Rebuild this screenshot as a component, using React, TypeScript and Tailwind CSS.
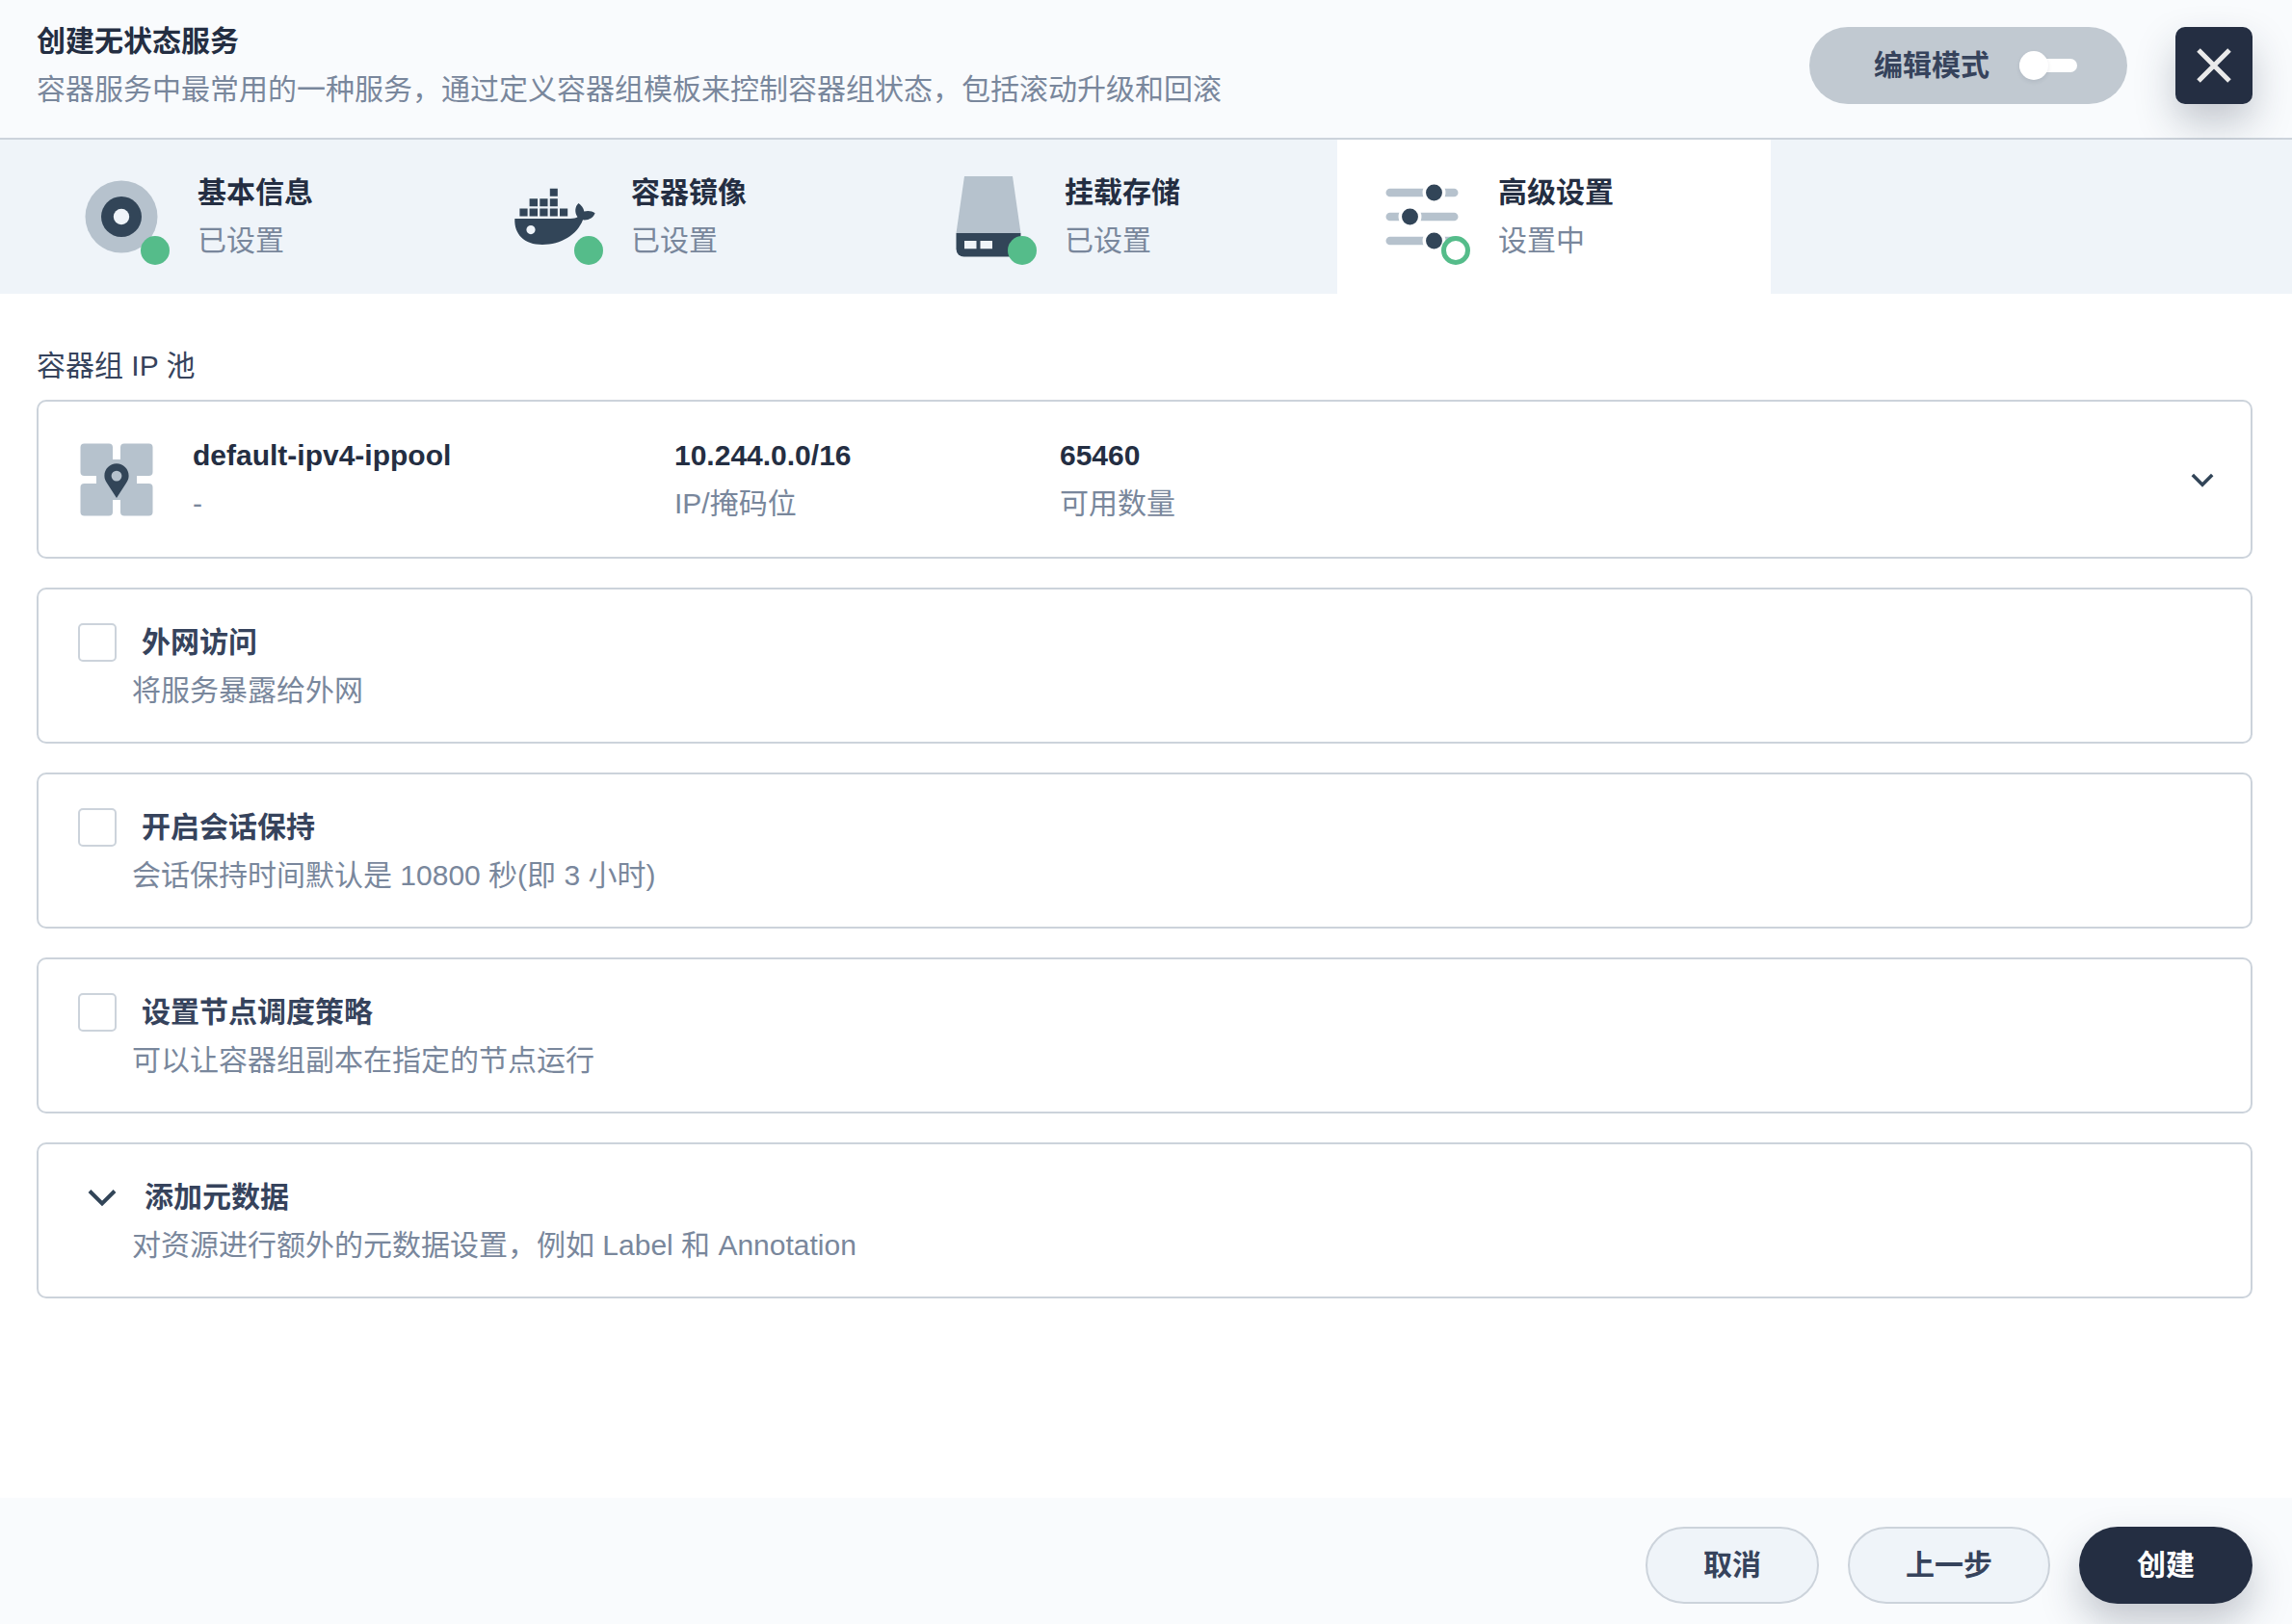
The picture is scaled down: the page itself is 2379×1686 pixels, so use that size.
import { useState } from 'react'
import type { ReactNode } from 'react'

type Step = {
    title: string
    status: string
    done: boolean
    icon: ReactNode
}

type Option = {
    id: string
    title: string
    description: string
}

const BasicIcon = () => (
    <svg viewBox="0 0 100 100" className="size-full">
        <circle cx="50" cy="50" r="37.5" fill="#b6c2cd" />
        <circle cx="50" cy="50" r="21" fill="#324558" />
        <circle cx="50" cy="50" r="8.2" fill="#eff4f9" />
    </svg>
)

const DockerIcon = () => (
    <svg viewBox="0 0 100 100" className="size-full" fill="#324558">
        <path d="M44.8 20.8h8v8h-8zM23.6 31.2h8.4v8h-8.4zM34.3 31.2h8.2v8h-8.2zM44.8 31.2h8v8h-8zM13.4 41.5h8.2v8h-8.2zM23.6 41.5h8.4v8h-8.4zM34.3 41.5h8.2v8h-8.2zM44.8 41.5h8v8h-8zM55 41.5h8.2v8h-8.2z" />
        <path
            fillRule="evenodd"
            d="M8.3 52H66C69.5 52 72 51.5 73.500 50.300C70.300 46 70.500 39.500 74.500 36C77.500 38 79.800 41 80.300 44.600C84 43.600 88.500 44 91.600 46.200C90 51 85 53.900 79 53.300C73 69 56 79 37 79C18 79 7.5 68 8.300 52ZM25 59A4.600 4.600 0 1 0 25 68.200A4.600 4.600 0 1 0 25 59Z"
        />
    </svg>
)

const StorageIcon = () => (
    <svg viewBox="0 0 100 100" className="size-full">
        <path d="M25 8H75L83.500 67H16.500Z" fill="#b6c2cd" />
        <path d="M16.500 67H83.500V83.500A8 8 0 0 1 75.500 91.500H24.500A8 8 0 0 1 16.500 83.500Z" fill="#324558" />
        <path d="M25 75h12.500v8.300h-12.500zM41.500 75h12.500v8.300h-12.500z" fill="#eff4f9" />
    </svg>
)

const SettingsIcon = () => (
    <svg viewBox="0 0 100 100" className="size-full">
        <g stroke="#b6c2cd" strokeWidth="8.600" strokeLinecap="round">
            <path d="M16.800 25H83.200M16.800 50H83.200M16.800 75H83.200" />
        </g>
        <g fill="#324558" stroke="#fff" strokeWidth="3.500">
            <circle cx="62.500" cy="25" r="10.200" />
            <circle cx="37.500" cy="50" r="10.200" />
            <circle cx="62.500" cy="75" r="10.200" />
        </g>
    </svg>
)

const PoolIcon = () => (
    <svg viewBox="0 0 100 100" className="size-full">
        <g fill="#b6c2cd">
            <rect x="12.500" y="12.500" width="33.500" height="33.500" rx="4" />
            <rect x="54" y="12.500" width="33.500" height="33.500" rx="4" />
            <rect x="12.500" y="54" width="33.500" height="33.500" rx="4" />
            <rect x="54" y="54" width="33.500" height="33.500" rx="4" />
            <rect x="29" y="29" width="42" height="42" />
        </g>
        <path
            fillRule="evenodd"
            fill="#324558"
            d="M50 33.300C57 33.300 62.600 38.900 62.600 45.900C62.600 49 61.500 51 60 53.500L50 69L40 53.500C38.500 51 37.400 49 37.400 45.900C37.400 38.900 43 33.300 50 33.300ZM50 40.700A5.400 5.400 0 1 0 50 51.500A5.400 5.400 0 1 0 50 40.700Z"
        />
    </svg>
)

const steps: Step[] = [
    { title: '基本信息', status: '已设置', done: true, icon: <BasicIcon /> },
    { title: '容器镜像', status: '已设置', done: true, icon: <DockerIcon /> },
    { title: '挂载存储', status: '已设置', done: true, icon: <StorageIcon /> },
    { title: '高级设置', status: '设置中', done: false, icon: <SettingsIcon /> },
]

const options: Option[] = [
    { id: 'external', title: '外网访问', description: '将服务暴露给外网' },
    { id: 'session', title: '开启会话保持', description: '会话保持时间默认是 10800 秒(即 3 小时)' },
    { id: 'schedule', title: '设置节点调度策略', description: '可以让容器组副本在指定的节点运行' },
]

export default function App() {
    const [current, setCurrent] = useState(3)
    const [editMode, setEditMode] = useState(false)
    const [checked, setChecked] = useState<string[]>([])

    const toggle = (id: string) => {
        setChecked(checked.includes(id) ? checked.filter((c) => c !== id) : [...checked, id])
    }

    return (
        <div className="flex min-h-screen flex-col bg-white font-['Liberation_Sans','Noto_Sans_CJK_SC',sans-serif] text-[30px] leading-[50px] text-[#79879c]">
            <header className="flex items-start justify-between border-b-2 border-[#ccd3db] bg-[#f9fbfd] pt-[18px] pr-[41px] pb-[25px] pl-[38px]">
                <div>
                    <h1 className="font-bold text-[#242e42]">创建无状态服务</h1>
                    <p>容器服务中最常用的一种服务，通过定义容器组模板来控制容器组状态，包括滚动升级和回滚</p>
                </div>
                <div className="flex gap-[50px] pt-[10px]">
                    <button
                        type="button"
                        role="switch"
                        aria-checked={editMode}
                        onClick={() => setEditMode(!editMode)}
                        className="flex h-20 items-center gap-[31px] rounded-full bg-[#c1c9d1] pr-[52px] pl-[67px] font-bold text-[#36435c]"
                    >
                        编辑模式
                        <span className={`flex h-[14px] w-[60px] items-center rounded-full bg-white ${editMode ? 'justify-end' : ''}`}>
                            <span className="size-[30px] rounded-full bg-white shadow-[0_2px_4px_rgba(36,46,66,0.1)]" />
                        </span>
                    </button>
                    <button
                        type="button"
                        aria-label="关闭"
                        className="flex size-20 items-center justify-center rounded-[10px] bg-[#242e42] shadow-[0_20px_40px_rgba(36,46,66,0.25)]"
                    >
                        <svg viewBox="0 0 50 50" className="size-[50px]" fill="none" stroke="#eaeaea" strokeWidth="5">
                            <path d="M9 9L41 41M41 9L9 41" />
                        </svg>
                    </button>
                </div>
            </header>

            <nav className="flex bg-[#eff4f9] pl-[38px]">
                {steps.map((step, i) => (
                    <button
                        key={step.title}
                        type="button"
                        onClick={() => setCurrent(i)}
                        className={`flex h-40 w-[450px] items-center gap-[29px] px-[38px] text-left ${i === current ? 'bg-white' : ''}`}
                    >
                        <span className="relative size-[100px]">
                            {step.icon}
                            <span
                                className={`absolute right-0 bottom-0 size-[30px] rounded-full ${step.done ? 'bg-[#55bc8a]' : 'border-[5px] border-[#55bc8a] bg-white'}`}
                            />
                        </span>
                        <span>
                            <span className="block font-bold text-[#242e42]">{step.title}</span>
                            <span className="block">{step.status}</span>
                        </span>
                    </button>
                ))}
            </nav>

            <main className="flex-1 pt-[50px] pr-[41px] pb-[50px] pl-[38px]">
                <h2 className="mb-[10px] text-[#36435c]">容器组 IP 池</h2>
                <div className="flex flex-col gap-[30px]">
                    <button
                        type="button"
                        aria-label="选择 IP 池"
                        className="flex items-center rounded-[10px] border-2 border-[#ccd3db] pt-[31px] pr-[30px] pb-[30px] pl-[31px] text-left"
                    >
                        <span className="size-[100px]">
                            <PoolIcon />
                        </span>
                        <span className="ml-[29px] w-[500px]">
                            <span className="block font-bold text-[#242e42]">default-ipv4-ippool</span>
                            <span className="block">-</span>
                        </span>
                        <span className="w-[400px]">
                            <span className="block font-bold text-[#242e42]">10.244.0.0/16</span>
                            <span className="block">IP/掩码位</span>
                        </span>
                        <span>
                            <span className="block font-bold text-[#242e42]">65460</span>
                            <span className="block">可用数量</span>
                        </span>
                        <svg viewBox="0 0 40 40" className="ml-auto size-10" fill="none" stroke="#324558" strokeWidth="3.500">
                            <path d="M9.800 15L20 25.200L30.200 15" />
                        </svg>
                    </button>

                    {options.map((option) => (
                        <div key={option.id} className="rounded-[10px] border-2 border-[#ccd3db] px-[41px] pt-[30px] pb-[28px]">
                            <div className="flex items-center gap-[26px]">
                                <input
                                    type="checkbox"
                                    id={option.id}
                                    checked={checked.includes(option.id)}
                                    onChange={() => toggle(option.id)}
                                    className="size-10 appearance-none rounded-[5px] border-2 border-[#ccd3db] bg-white checked:bg-[#324558]"
                                />
                                <label htmlFor={option.id} className="font-bold text-[#36435c]">
                                    {option.title}
                                </label>
                            </div>
                            <p className="pl-[56px]">{option.description}</p>
                        </div>
                    ))}

                    <div className="rounded-[10px] border-2 border-[#ccd3db] px-[41px] pt-[30px] pb-[28px]">
                        <button type="button" className="flex items-center gap-[19px] font-bold text-[#36435c]">
                            <svg viewBox="0 0 50 50" className="size-[50px]" fill="none" stroke="#324558" strokeWidth="4">
                                <path d="M12 18.500L25 31.500L38 18.500" />
                            </svg>
                            添加元数据
                        </button>
                        <p className="pl-[56px]">对资源进行额外的元数据设置，例如 Label 和 Annotation</p>
                    </div>
                </div>
            </main>

            <footer className="flex justify-end gap-[30px] bg-[#f9fbfd] pt-[30px] pr-[41px] pb-[21px] font-bold text-[#36435c]">
                <button type="button" className="h-20 rounded-full border-2 border-[#ccd3db] bg-[#eff4f9] px-[58px]">
                    取消
                </button>
                <button type="button" className="h-20 rounded-full border-2 border-[#ccd3db] bg-[#eff4f9] px-[58px]">
                    上一步
                </button>
                <button
                    type="button"
                    className="h-20 rounded-full bg-[#242e42] px-[60px] text-white shadow-[0_20px_40px_rgba(36,46,66,0.25)]"
                >
                    创建
                </button>
            </footer>
        </div>
    )
}
